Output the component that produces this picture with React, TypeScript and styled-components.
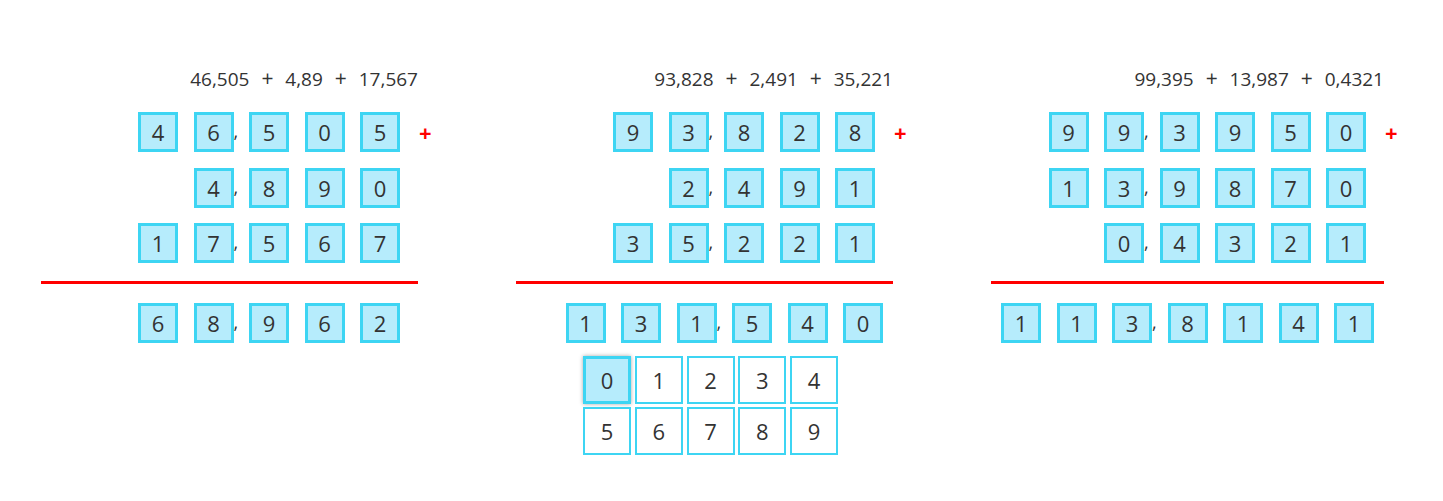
import React from "react";
import styled, { createGlobalStyle, css } from "styled-components";

const GlobalStyle = createGlobalStyle`
  html, body { margin: 0; padding: 0; background: #fff; }
  body { font-family: "Open Sans", "Noto Sans", sans-serif; color: #333; }
`;

const Page = styled.div`
  display: flex;
  align-items: flex-start;
  gap: 98px;
  min-height: 501px;
  box-sizing: border-box;
  padding: 66px 0 0 41px;
`;

const Panel = styled.div<{ $width: number }>`
  position: relative;
  width: ${(p) => p.$width}px;
  display: flex;
  flex-direction: column;
`;

const Title = styled.div`
  text-align: right;
  font-size: 19px;
  line-height: 26px;
  white-space: pre;
  color: #333;
  margin-bottom: 20px;
`;

const Op = styled.span`
  font-size: 21px;
  font-weight: 400;
  line-height: 0;
  margin: 0 7px;
`;

const Rows = styled.div`
  display: flex;
  flex-direction: column;
  gap: 15.5px;
`;

const DigitRow = styled.div<{ $pad: number }>`
  position: relative;
  display: flex;
  justify-content: flex-end;
  gap: 15.5px;
  height: 40px;
  padding-right: ${(p) => p.$pad}px;
`;

const Plus = styled.span`
  position: absolute;
  left: calc(100% + 1px);
  top: 50%;
  transform: translateY(-50%);
  color: #ff0000;
  font-size: 22px;
  font-weight: 700;
  line-height: 1;
`;

const Cell = styled.div<{ $comma?: boolean }>`
  position: relative;
  box-sizing: border-box;
  width: 40px;
  height: 40px;
  border: 3px solid #3dd5f3;
  background: #b6ecfc;
  display: flex;
  align-items: center;
  justify-content: center;
  font-size: 22px;
  line-height: 1;
  color: #333;
  ${(p) =>
    p.$comma &&
    css`
      &::after {
        content: ",";
        position: absolute;
        left: calc(100% + 3px);
        top: 7px;
        font-size: 18px;
        line-height: 18px;
        color: #333;
      }
    `}
`;

const Divider = styled.div`
  height: 3px;
  background: #ff0000;
  margin: 18px 0 19px;
`;

const Keypad = styled.div`
  align-self: flex-start;
  margin: 13px 0 0 67px;
  display: grid;
  grid-template-columns: repeat(5, 48px);
  grid-auto-rows: 48px;
  column-gap: 3.75px;
  row-gap: 3px;
`;

const Key = styled.div<{ $active?: boolean }>`
  box-sizing: border-box;
  border: 2px solid #3dd5f3;
  background: #fff;
  display: flex;
  align-items: center;
  justify-content: center;
  font-size: 22px;
  line-height: 1;
  color: #333;
  ${(p) =>
    p.$active &&
    css`
      border-width: 3px;
      background: #b6ecfc;
      box-shadow: 0 0 4px rgba(0, 0, 0, 0.35);
    `}
`;

type PanelData = {
  terms: string[];
  width: number;
  rows: string[];
  result: string;
  resultPad: number;
  keypad?: boolean;
};

const panels: PanelData[] = [
  {
    terms: ["46,505", "4,89", "17,567"],
    width: 377,
    rows: ["46,505", "4,890", "17,567"],
    result: "68,962",
    resultPad: 18,
  },
  {
    terms: ["93,828", "2,491", "35,221"],
    width: 377,
    rows: ["93,828", "2,491", "35,221"],
    result: "131,540",
    resultPad: 10,
    keypad: true,
  },
  {
    terms: ["99,395", "13,987", "0,4321"],
    width: 393,
    rows: ["99,3950", "13,9870", "0,4321"],
    result: "113,8141",
    resultPad: 10,
  },
];

function NumberRow({ value, pad, plus }: { value: string; pad: number; plus?: boolean }) {
  const [intPart, decPart] = value.split(",");
  const intDigits = intPart.split("");
  const decDigits = decPart.split("");
  return (
    <DigitRow $pad={pad}>
      {intDigits.map((d, i) => (
        <Cell key={"i" + i} $comma={i === intDigits.length - 1}>
          {d}
        </Cell>
      ))}
      {decDigits.map((d, i) => (
        <Cell key={"d" + i}>{d}</Cell>
      ))}
      {plus && <Plus>+</Plus>}
    </DigitRow>
  );
}

export default function App() {
  return (
    <>
      <GlobalStyle />
      <Page>
        {panels.map((p, idx) => (
          <Panel key={idx} $width={p.width}>
            <Title>
              {p.terms.map((t, i) => (
                <React.Fragment key={i}>
                  {i > 0 && (
                    <>
                      {" "}
                      <Op>+</Op>{" "}
                    </>
                  )}
                  {t}
                </React.Fragment>
              ))}
            </Title>
            <Rows>
              {p.rows.map((r, i) => (
                <NumberRow key={i} value={r} pad={18} plus={i === 0} />
              ))}
            </Rows>
            <Divider />
            <NumberRow value={p.result} pad={p.resultPad} />
            {p.keypad && (
              <Keypad>
                {["0", "1", "2", "3", "4", "5", "6", "7", "8", "9"].map((k) => (
                  <Key key={k} $active={k === "0"}>
                    {k}
                  </Key>
                ))}
              </Keypad>
            )}
          </Panel>
        ))}
      </Page>
    </>
  );
}
